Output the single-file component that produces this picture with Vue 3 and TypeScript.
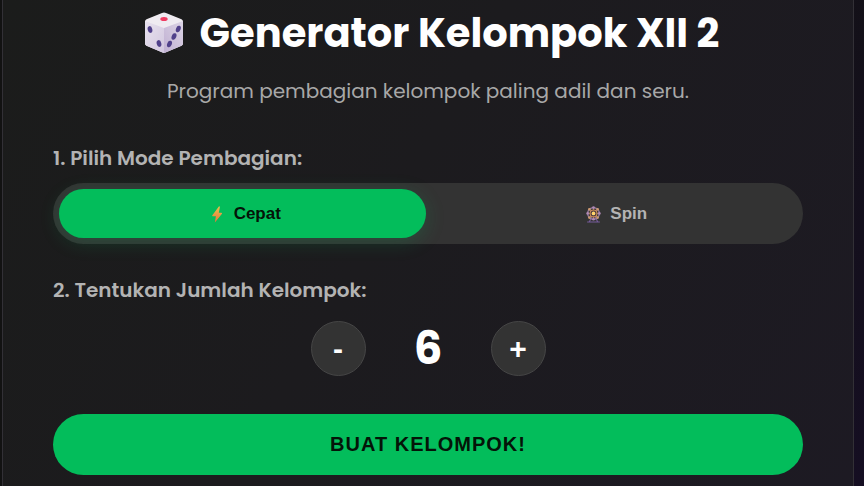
<script setup lang="ts">
import { ref } from 'vue'

type Mode = 'cepat' | 'spin'

const mode = ref<Mode>('cepat')
const groups = ref(6)

const cabins = Array.from({ length: 8 }, (_, i) => {
  const a = (i * Math.PI) / 4
  return { x: 16 + 11 * Math.cos(a), y: 14 + 11 * Math.sin(a) }
})

function change(step: number) {
  groups.value = Math.max(2, groups.value + step)
}
</script>

<template>
  <div class="page">
    <main class="card">
      <header class="head">
        <h1 class="title">
          <svg class="dice" viewBox="0 0 40 42" aria-hidden="true">
            <defs>
              <linearGradient id="diceLeft" x1="0" y1="0" x2="1" y2="1">
                <stop offset="0" stop-color="#e8e2ee" />
                <stop offset="1" stop-color="#d2c7df" />
              </linearGradient>
              <linearGradient id="diceRight" x1="1" y1="0" x2="0" y2="1">
                <stop offset="0" stop-color="#dcd4e5" />
                <stop offset="1" stop-color="#c0b0d2" />
              </linearGradient>
            </defs>
            <path d="M1 9.500Q1 8 2.500 7.300L18 1Q20 .2 22 1L37.500 7.300Q39 8 39 9.500V31.500Q39 33 37.500 33.700L21.500 40.500Q20 41.200 18.500 40.500L2.500 33.700Q1 33 1 31.500Z" fill="#efebf1" />
            <path d="M1 9L20 16V41Q19 40.900 18.500 40.500L2.500 33.700Q1 33 1 31.500Z" fill="url(#diceLeft)" />
            <path d="M39 9L20 16V41Q21 40.900 21.500 40.500L37.500 33.700Q39 33 39 31.500Z" fill="url(#diceRight)" />
            <ellipse cx="20" cy="7" rx="3.700" ry="2" fill="#f03c62" />
            <g fill="#50408a">
              <ellipse cx="6" cy="17.500" rx="2.300" ry="3.400" transform="rotate(-14 6 17.500)" />
              <ellipse cx="15" cy="31.500" rx="2.300" ry="3.400" transform="rotate(-14 15 31.500)" />
              <ellipse cx="34.300" cy="17" rx="2.300" ry="3.400" transform="rotate(22 34.300 17)" />
              <ellipse cx="30" cy="24.500" rx="2.300" ry="3.400" transform="rotate(22 30 24.500)" />
              <ellipse cx="25.500" cy="32" rx="2.300" ry="3.400" transform="rotate(22 25.500 32)" />
            </g>
          </svg>
          <span>Generator Kelompok XII 2</span>
        </h1>
        <p class="subtitle">Program pembagian kelompok paling adil dan seru.</p>
      </header>

      <section class="field">
        <h2 id="mode-label" class="label">1. Pilih Mode Pembagian:</h2>
        <div class="modes" role="group" aria-labelledby="mode-label">
          <button type="button" class="mode" :class="{ active: mode === 'cepat' }" :aria-pressed="mode === 'cepat'" @click="mode = 'cepat'">
            <svg class="icon" viewBox="0 0 32 32" aria-hidden="true">
              <defs>
                <linearGradient id="bolt" x1="0" y1="0" x2="0" y2="1">
                  <stop offset="0" stop-color="#e8c04c" />
                  <stop offset="1" stop-color="#e8743c" />
                </linearGradient>
              </defs>
              <path d="M18.500 1L6 18Q5.500 19.500 7 19.500H13L11 31L24.500 14.500Q25 12.500 23 12.500H18.500L20.500 2Q20 0 18.500 1Z" fill="url(#bolt)" />
            </svg>
            <span>Cepat</span>
          </button>
          <button type="button" class="mode" :class="{ active: mode === 'spin' }" :aria-pressed="mode === 'spin'" @click="mode = 'spin'">
            <svg class="icon" viewBox="0 0 32 32" aria-hidden="true">
              <path d="M16 14L8 30M16 14L24 30M4 30H28" fill="none" stroke="#775c9c" stroke-width="2" />
              <circle cx="16" cy="14" r="11" fill="none" stroke="#94789c" stroke-width="2.500" />
              <path d="M16 3V25M5 14H27M8 6L24 22M24 6L8 22" stroke="#a87f90" stroke-width="1.500" />
              <circle cx="16" cy="14" r="6.500" fill="#493943" stroke="#d08f56" stroke-width="2" />
              <circle v-for="(c, i) in cabins" :key="i" :cx="c.x" :cy="c.y" r="2.500" :fill="i % 2 ? '#cf9a70' : '#b08ab5'" />
              <circle cx="16" cy="14" r="3.500" fill="#ffd36b" />
            </svg>
            <span>Spin</span>
          </button>
        </div>
      </section>

      <section class="field">
        <h2 id="count-label" class="label">2. Tentukan Jumlah Kelompok:</h2>
        <div class="counter" role="group" aria-labelledby="count-label">
          <button type="button" class="step" aria-label="Kurangi" @click="change(-1)">-</button>
          <output class="count">{{ groups }}</output>
          <button type="button" class="step" aria-label="Tambah" @click="change(1)">+</button>
        </div>
      </section>

      <button type="button" class="submit">BUAT KELOMPOK!</button>
    </main>
  </div>
</template>

<style>
body {
  margin: 0;
  background: #120e1c;
}
</style>

<style scoped>
.page {
  box-sizing: border-box;
  min-height: 100vh;
  padding: 0 10px 0 2px;
  display: flex;
  background: linear-gradient(135deg, #121212 40%, #150e22);
  font-family: Poppins, Inter, "Open Sans", sans-serif;
}

.card {
  box-sizing: border-box;
  flex: 1;
  min-width: 0;
  padding: 3px 50px 11px;
  border: solid #323036;
  border-width: 0 1px;
  background: linear-gradient(120deg, #1b1c1b, #1c1b1e 45%, #1d1a23);
}

.head {
  text-align: center;
}

.title {
  margin: 0;
  padding-left: 7px;
  display: flex;
  align-items: center;
  justify-content: center;
  gap: 16px;
  color: #fff;
  font-size: 40px;
  font-weight: 700;
  line-height: 60px;
}

.dice {
  width: 40px;
  height: 42px;
  flex: none;
}

.subtitle {
  margin: 13px 0 37px;
  color: #a8a8a8;
  font-size: 20px;
  line-height: 30px;
}

.label {
  margin: 0;
  color: #b3b3b3;
  font-size: 20px;
  font-weight: 600;
  line-height: 30px;
}

.modes {
  margin: 10px 0 31px;
  padding: 6px;
  display: flex;
  gap: 5px;
  border-radius: 50px;
  background: #333;
}

.mode {
  flex: 1;
  height: 49px;
  padding: 1px 0 0 5px;
  display: flex;
  align-items: center;
  justify-content: center;
  gap: 8px;
  border: 0;
  border-radius: 50px;
  background: transparent;
  color: #b3b3b3;
  font: 700 17px/24px "Liberation Sans", Arial, sans-serif;
  cursor: pointer;
}

.mode.active {
  background: #03bd5b;
  color: #041408;
  box-shadow: 0 4px 20px rgba(4, 190, 94, 0.2);
}

.icon {
  width: 17px;
  height: 17px;
  flex: none;
}

.counter {
  margin: 16px 0 38px;
  display: flex;
  align-items: center;
  justify-content: center;
  gap: 30px;
}

.step {
  width: 55px;
  height: 55px;
  padding: 0;
  border: 1px solid #464646;
  border-radius: 50%;
  background: #333;
  color: #fff;
  font: 700 30px/32px "Liberation Sans", Arial, sans-serif;
  cursor: pointer;
}

.count {
  width: 65px;
  color: #fff;
  text-align: center;
  font-size: 45px;
  font-weight: 700;
  line-height: 55px;
}

.submit {
  width: 100%;
  height: 61px;
  padding: 0 0 2px;
  display: block;
  border: 0;
  border-radius: 50px;
  background: #03bd5b;
  color: #041408;
  font: 700 20px/24px "Liberation Sans", Arial, sans-serif;
  letter-spacing: 1px;
  cursor: pointer;
}
</style>
